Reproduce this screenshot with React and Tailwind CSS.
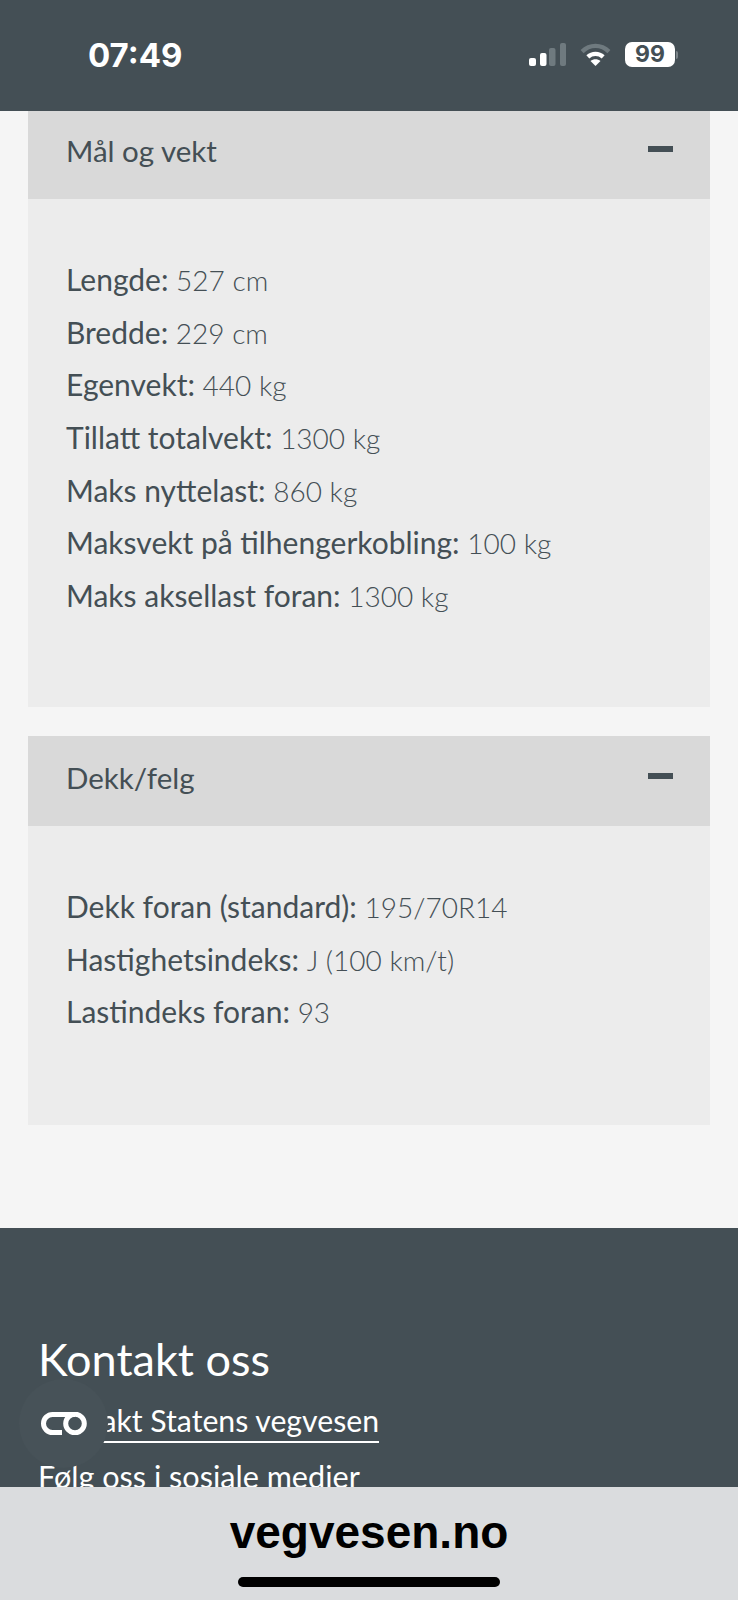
const dimensions = [
  ["Lengde:", "527 cm"],
  ["Bredde:", "229 cm"],
  ["Egenvekt:", "440 kg"],
  ["Tillatt totalvekt:", "1300 kg"],
  ["Maks nyttelast:", "860 kg"],
  ["Maksvekt på tilhengerkobling:", "100 kg"],
  ["Maks aksellast foran:", "1300 kg"],
];

const tyres = [
  ["Dekk foran (standard):", "195/70R14"],
  ["Hastighetsindeks:", "J (100 km/t)"],
  ["Lastindeks foran:", "93"],
];

const StatusBar = () => (
  <div className="h-[111px] shrink-0 bg-[#444f55] flex items-start justify-between pt-[37px] pl-[88px] pr-[60px]">
    <span className="text-[33px] leading-[36px] font-bold text-white font-['Inter',sans-serif]">07:49</span>
    <div className="flex items-center gap-[14px] pt-[5px]">
      <svg width="37" height="23" viewBox="0 0 37 23">
        <rect x="0" y="15" width="7" height="8" rx="2" fill="#fff" />
        <rect x="11" y="10" width="6.500" height="13" rx="2" fill="#fff" />
        <rect x="20" y="5" width="6.500" height="18" rx="2" fill="#6f7a7f" />
        <rect x="31" y="0" width="6" height="23" rx="2" fill="#6f7a7f" />
      </svg>
      <svg width="31" height="23" viewBox="0 0 32 24" fill="none">
        <path d="M2 9C10 1 22 1 30 9" stroke="#6f7a7f" strokeWidth="4.500" />
        <path d="M8 14.500C12.500 10.300 19.500 10.300 24 14.500" stroke="#fff" strokeWidth="4.500" />
        <path d="M16 24L10.800 18.800C13.800 16.400 18.200 16.400 21.200 18.800Z" fill="#fff" />
      </svg>
      <div className="flex items-center gap-[1px]">
        <div className="w-[50px] h-[25px] rounded-[7px] bg-white flex items-center justify-center text-[23px] font-bold leading-none text-[#444f55] font-['Inter',sans-serif]">
          99
        </div>
        <div className="w-[2px] h-[8px] rounded-r-full bg-[#7b8489]" />
      </div>
    </div>
  </div>
);

const Section = ({ title, rows, headerClass, bodyClass }) => (
  <div className="mx-[28px]">
    <div className={`bg-[#d9d9d9] flex justify-between pl-[38px] pr-[37px] ${headerClass}`}>
      <span className="text-[29.5px] leading-[36px] text-[#444f55]">{title}</span>
      <div className="w-[25px] h-[6px] mt-[13px] bg-[#444f55]" />
    </div>
    <div className={`bg-[#ececec] pl-[38px] ${bodyClass}`}>
      {rows.map(([label, value]) => (
        <p key={label} className="h-[52.7px] text-[30px] leading-[52.7px] text-[#444f55] whitespace-nowrap">
          {label} <span className="text-[28px] font-light">{value}</span>
        </p>
      ))}
    </div>
  </div>
);

export default function App() {
  return (
    <div className="relative h-[1600px] overflow-hidden flex flex-col bg-[#f5f5f5] font-['Lato',sans-serif]">
      <StatusBar />

      <div className="h-[1117px] shrink-0 flex flex-col gap-[29px]">
        <Section title="Mål og vekt" rows={dimensions} headerClass="h-[88px] pt-[22px]" bodyClass="h-[508px] pt-[54px]" />
        <Section title="Dekk/felg" rows={tyres} headerClass="h-[90px] pt-[24px]" bodyClass="h-[299px] pt-[54px]" />
      </div>

      <div className="h-[259px] shrink-0 overflow-hidden bg-[#444f55] pt-[103px] pl-[38px] text-white">
        <h2 className="text-[45px] leading-[56px]">Kontakt oss</h2>
        <a className="block w-fit mt-[15px] pb-[3px] border-b-2 border-white text-[30.2px] leading-[36px] whitespace-nowrap">
          Kontakt Statens vegvesen
        </a>
        <p className="mt-[16px] text-[30.6px] leading-[36px] whitespace-nowrap">Følg oss i sosiale medier</p>
      </div>

      <div className="flex-1 bg-[#dadcde] flex flex-col items-center pt-[19px]">
        <span className="text-[46px] leading-[52px] font-bold text-black font-['Liberation_Sans',sans-serif]">vegvesen.no</span>
        <div className="mt-[19px] w-[262px] h-[10px] rounded-full bg-black" />
      </div>

      {/* floating button, sits on top of the link text */}
      <div className="absolute left-[19px] top-[1379px] w-[89px] h-[89px] rounded-full bg-[#475258] flex items-center justify-center">
        <svg width="46" height="23" viewBox="0 0 46 23" fill="none" stroke="#fff" strokeWidth="5" className="ml-[1px]">
          <path d="M21 20.500H11.500A9 9 0 0 1 11.500 2.500H34" />
          <circle cx="34" cy="11.500" r="9.300" />
        </svg>
      </div>
    </div>
  );
}
